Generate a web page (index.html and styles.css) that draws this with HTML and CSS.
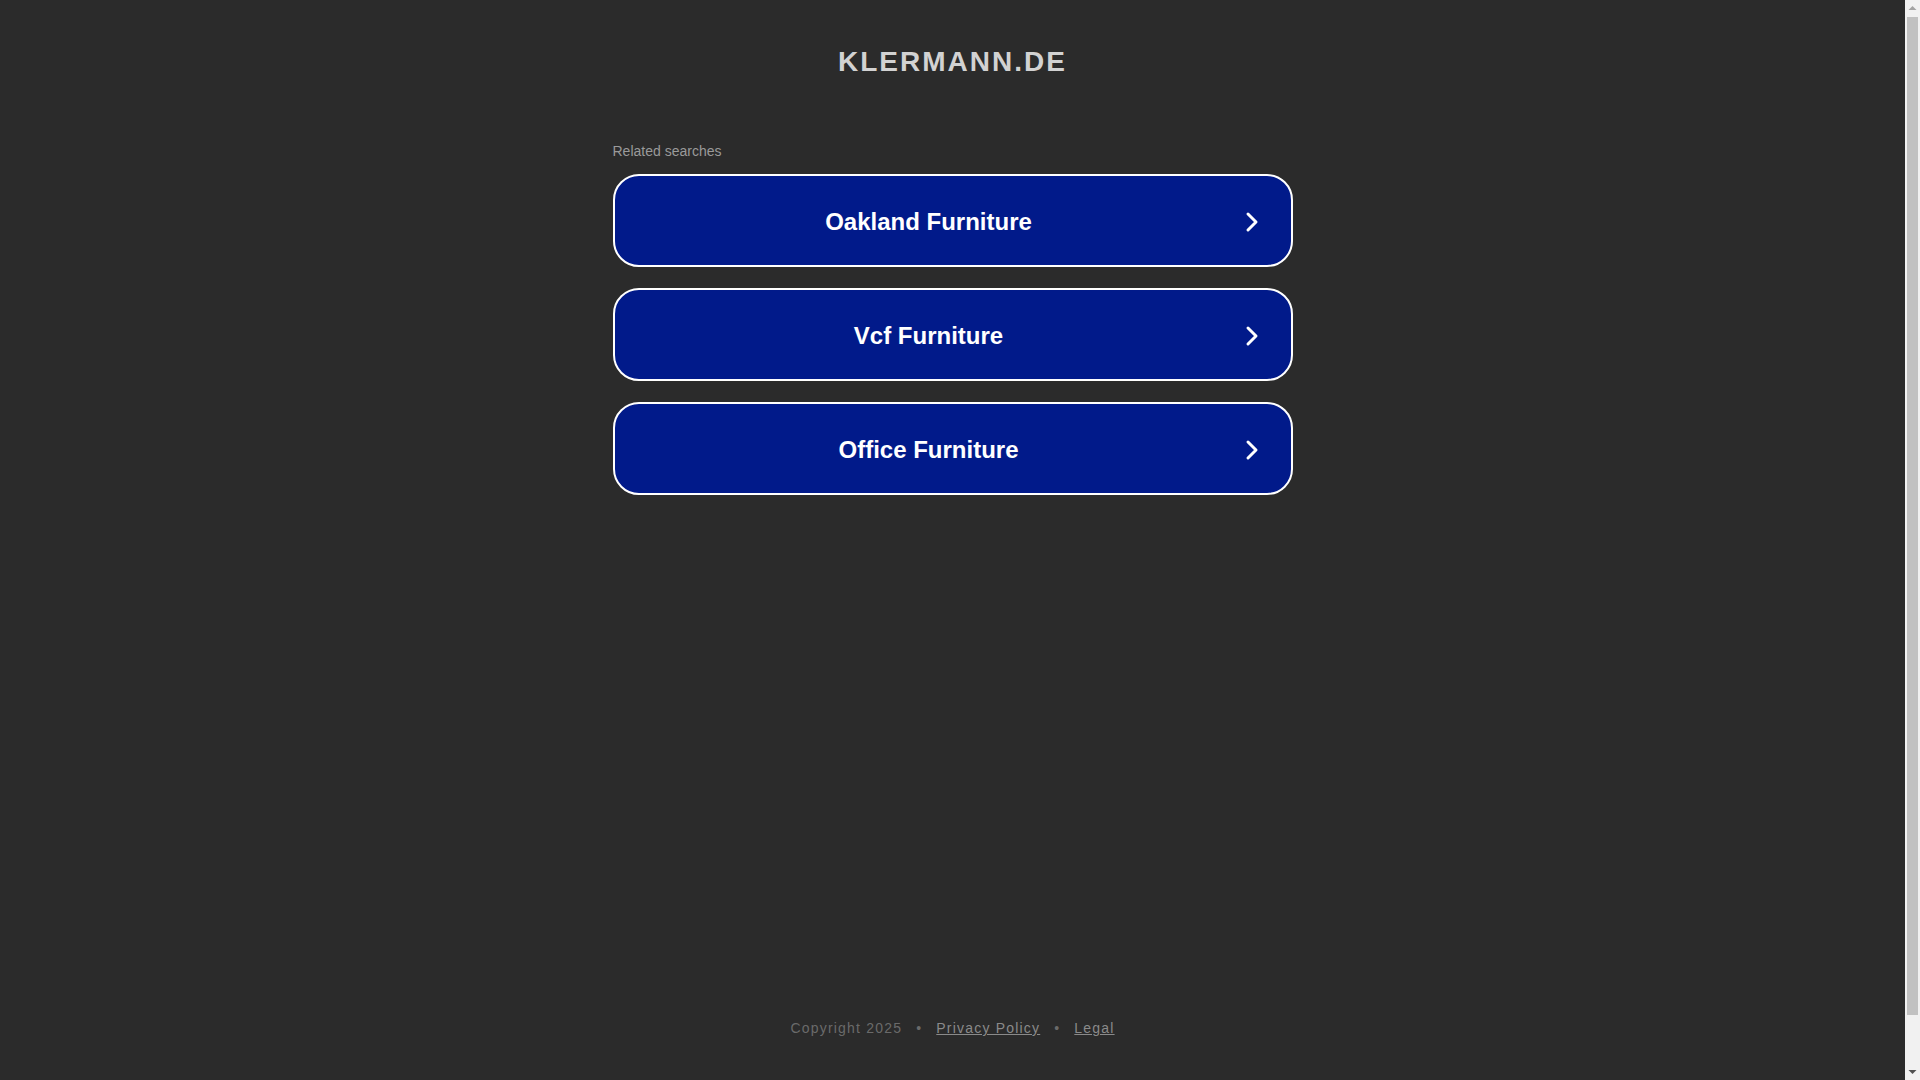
FILE: index.html
```html
<!DOCTYPE html>
<html lang="en">
<head>
<meta charset="utf-8">
<title>klermann.de</title>
<link rel="stylesheet" href="styles.css">
</head>
<body>
<div class="page">
  <header class="header">
    <h1 class="title">KLERMANN.DE</h1>
  </header>
  <main class="main">
    <div class="related">Related searches</div>
    <div class="list">
      <a class="item" href="#">
        <span class="item-text">Oakland Furniture</span>
        <svg class="chev" viewBox="0 0 14 22" width="14" height="22"><polyline points="3,3 11,11 3,19" fill="none" stroke="#fff" stroke-width="3" stroke-linecap="round" stroke-linejoin="round"/></svg>
      </a>
      <a class="item" href="#">
        <span class="item-text">Vcf Furniture</span>
        <svg class="chev" viewBox="0 0 14 22" width="14" height="22"><polyline points="3,3 11,11 3,19" fill="none" stroke="#fff" stroke-width="3" stroke-linecap="round" stroke-linejoin="round"/></svg>
      </a>
      <a class="item" href="#">
        <span class="item-text">Office Furniture</span>
        <svg class="chev" viewBox="0 0 14 22" width="14" height="22"><polyline points="3,3 11,11 3,19" fill="none" stroke="#fff" stroke-width="3" stroke-linecap="round" stroke-linejoin="round"/></svg>
      </a>
    </div>
  </main>
  <footer class="footer">
    <span class="copy">Copyright 2025</span>
    <span class="dot">•</span>
    <a class="flink" href="#">Privacy Policy</a>
    <span class="dot">•</span>
    <a class="flink" href="#">Legal</a>
  </footer>
</div>
<div class="scrollbar">
  <div class="sb-btn"><svg viewBox="0 0 15 17" width="15" height="17"><polygon points="3.5,10 11.5,10 7.5,6" fill="#a3a3a3"/></svg></div>
  <div class="sb-track"><div class="sb-thumb"></div></div>
  <div class="sb-btn"><svg viewBox="0 0 15 17" width="15" height="17"><polygon points="3.5,7 11.5,7 7.5,11" fill="#505050"/></svg></div>
</div>
</body>
</html>
```

FILE: styles.css
```css
html, body {
  margin: 0;
  padding: 0;
  background: #2b2b2b;
  overflow: hidden;
}
body {
  font-family: "Liberation Sans", Arial, sans-serif;
  display: flex;
  height: 1080px;
}
.page {
  flex: 1;
  min-width: 0;
  height: 1080px;
  display: flex;
  flex-direction: column;
}
.header {
  padding-top: 45px;
  text-align: center;
}
.title {
  margin: 0;
  font-size: 28px;
  line-height: 34px;
  font-weight: 700;
  letter-spacing: 2px;
  color: #d2d2d2;
}
.main {
  width: 680px;
  margin: 63px auto 0;
}
.related {
  font-size: 14px;
  line-height: 18px;
  color: #9a9a9a;
  margin-bottom: 14px;
}
.list {
  display: flex;
  flex-direction: column;
  gap: 21px;
}
.item {
  box-sizing: border-box;
  height: 93px;
  border: 2px solid #ffffff;
  border-radius: 26px;
  background: #011a8a;
  display: flex;
  align-items: center;
  padding-right: 32px;
  padding-top: 2px;
  text-decoration: none;
}
.item-text {
  flex: 1;
  text-align: center;
  font-size: 24px;
  font-weight: 700;
  color: #ffffff;
  padding-left: 4px;
}
.chev {
  display: block;
  flex: none;
  margin-left: 6px;
}
.footer {
  margin-top: auto;
  padding-bottom: 42px;
  display: flex;
  justify-content: center;
  align-items: center;
  gap: 14px;
  font-size: 14px;
  line-height: 20px;
  letter-spacing: 1.2px;
}
.copy, .dot {
  color: #6a6a6a;
}
.flink {
  color: #8a8a8a;
  text-decoration: underline;
}
.scrollbar {
  flex: none;
  width: 15px;
  height: 1080px;
  background: #f1f1f1;
  display: flex;
  flex-direction: column;
}
.sb-btn {
  height: 17px;
  flex: none;
}
.sb-btn svg {
  display: block;
}
.sb-track {
  flex: 1;
  padding: 0 2px;
  display: flex;
}
.sb-thumb {
  flex: 1;
  background: #c1c1c1;
  margin-bottom: 48px;
}
```
